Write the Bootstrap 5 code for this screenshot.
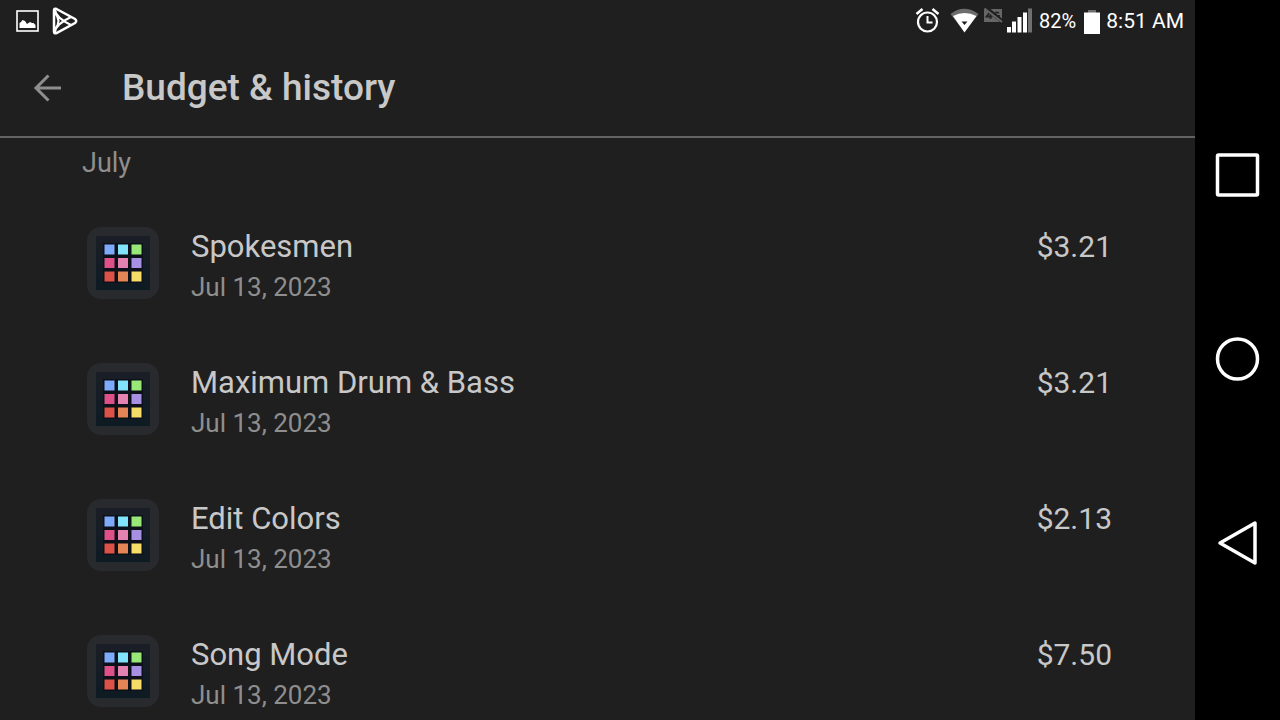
<!DOCTYPE html>
<html lang="en" data-bs-theme="dark">
<head>
<meta charset="utf-8">
<meta name="viewport" content="width=device-width, initial-scale=1">
<title>Budget &amp; history</title>
<link href="https://cdn.jsdelivr.net/npm/bootstrap@5.3.0/dist/css/bootstrap.min.css" rel="stylesheet">
<style>
  body { background: #1f1f1f; color: #c8c8c8; font-family: Roboto, sans-serif; }
  svg { display: block; flex: none; }
  .screen { height: 100vh; }
  .status { height: 40px; padding: 2px 11px 0 16px; gap: 13px; color: #fff; font-size: 21px; line-height: 24px; }
  .charge { font-size: 20px; }
  .battery { margin: 0 6px 0 8px; }
  .topbar { height: 98px; border-bottom: 2px solid #636363; padding: 0 32px; gap: 58px; }
  .topbar h1 { font-size: 37px; line-height: 40px; font-weight: 500; color: #c8c8c8; }
  .back { color: #8e8e8e; }
  .month { font-size: 27px; line-height: 32px; font-weight: 400; color: #8e8e8e; padding: 9px 82px 0; }
  .purchases { padding: 20px 83px 0; }
  .purchase { height: 136px; padding: 28px 0 0 4px; gap: 32px; }
  .name { font-size: 31px; line-height: 40px; }
  .price { font-size: 30px; line-height: 40px; }
  .date { font-size: 26px; line-height: 40px; color: #8e8e8e; }
  .rail { width: 85px; background: #000; padding-top: 83px; }
  .rail button { height: 184px; }
</style>
</head>
<body>
<div class="screen d-flex overflow-hidden">
  <div class="flex-grow-1 overflow-hidden">
    <div class="status d-flex align-items-center">
      <svg width="23" height="22" viewBox="0 0 23 22" aria-hidden="true"><rect x="1" y="1" width="21" height="20" fill="none" stroke="#fff" stroke-width="1.600"/><path d="M3.500 18v-5l1.500-1 1.500-2 2.500 1 2 3 3-2 2 1 1.500 0 2 2v3z" fill="#fff"/></svg>
      <svg width="26" height="28" viewBox="0 0 26 28" fill="none" stroke="#fff" aria-hidden="true"><path d="M2 3.500Q2 .800 4.500 2L23 12q2.500 2 0 4L4.500 26Q2 27 2 24.500z" stroke-width="2.500"/><path d="M3 3q1 8 16 15M3 25q1-8 16-15M3 6q7 8 0 16" stroke-width="2.100"/></svg>
      <div class="ms-auto d-flex align-items-center">
        <svg width="124" height="40" viewBox="916 1 124 40" role="img" aria-label="Alarm, Wi-Fi, no 4G, signal strength">
          <g fill="none" stroke="#fff"><circle cx="928.500" cy="22" r="9.500" stroke-width="2.200"/><path d="M928.500 16v6.500h5" stroke-width="2"/><path d="M917.500 14l6-5M939.500 14l-6-5" stroke-width="2.500"/></g>
          <path d="M951.500 14q13.500-10.500 28 0L965.500 32z" fill="#6d6d6d"/><path d="M954 16q11.500-6 23.500 0L965.500 32.500z" fill="#fff"/><path d="M962.500 21.500h6l-3 3.500z" fill="#1f1f1f"/>
          <path d="M985 9h18v13h-18z" fill="#666"/><path d="M991 12l-3.500 4.500h6M991.500 12v7M1000 13q-4-2-4 2t4 3v-2h-2" fill="none" stroke="#242424" stroke-width="1.800"/><path d="M986.500 7.500L1004 22" stroke="#1f1f1f" stroke-width="4"/><path d="M985.500 8.500L1003 22" stroke="#666" stroke-width="2"/>
          <path d="M1008 27h4v5.500h-4zM1013 21.500h4v11h-4zM1018.500 17h4v15.500h-4zM1024 12.500h4v20h-4z" fill="#fff"/><path d="M1029 8.500h4v24h-4z" fill="#707070"/>
        </svg>
        <span class="charge">82%</span>
        <svg class="battery" width="16" height="25" viewBox="0 0 16 25" aria-hidden="true"><path d="M4 1h8v4H4z" fill="#707070"/><path d="M0 3.500h16V25H0z" fill="#fff"/></svg>
        <span>8:51 AM</span>
      </div>
    </div>
    <header class="topbar d-flex align-items-center">
      <button type="button" class="back btn p-0 border-0" aria-label="Back"><svg width="32" height="32" viewBox="0 0 32 32" fill="none" stroke="currentColor" stroke-width="3"><path d="M29 16H4M16.500 3.500L4 16l12.500 12.500"/></svg></button>
      <h1 class="m-0">Budget &amp; history</h1>
    </header>
    <main>
      <h2 class="month m-0">July</h2>
      <ul class="purchases list-unstyled m-0">
        <li class="purchase d-flex"><svg width="72" height="72" aria-hidden="true"><use href="#pads"/></svg><div class="flex-grow-1"><div class="name">Spokesmen</div><div class="date">Jul 13, 2023</div></div><div class="price">$3.21</div></li>
        <li class="purchase d-flex"><svg width="72" height="72" aria-hidden="true"><use href="#pads"/></svg><div class="flex-grow-1"><div class="name">Maximum Drum &amp; Bass</div><div class="date">Jul 13, 2023</div></div><div class="price">$3.21</div></li>
        <li class="purchase d-flex"><svg width="72" height="72" aria-hidden="true"><use href="#pads"/></svg><div class="flex-grow-1"><div class="name">Edit Colors</div><div class="date">Jul 13, 2023</div></div><div class="price">$2.13</div></li>
        <li class="purchase d-flex"><svg width="72" height="72" aria-hidden="true"><use href="#pads"/></svg><div class="flex-grow-1"><div class="name">Song Mode</div><div class="date">Jul 13, 2023</div></div><div class="price">$7.50</div></li>
      </ul>
    </main>
  </div>
  <nav class="rail d-flex flex-column flex-shrink-0" aria-label="System navigation">
    <button type="button" class="btn p-0 border-0 d-flex align-items-center justify-content-center" aria-label="Recent apps"><svg width="46" height="46" viewBox="0 0 46 46" fill="none" stroke="#fff" stroke-width="3.500"><rect x="2.500" y="3" width="40" height="40" rx="1"/></svg></button>
    <button type="button" class="btn p-0 border-0 d-flex align-items-center justify-content-center" aria-label="Home"><svg width="46" height="46" viewBox="0 0 46 46" fill="none" stroke="#fff" stroke-width="3.500"><circle cx="22.500" cy="23" r="20"/></svg></button>
    <button type="button" class="btn p-0 border-0 d-flex align-items-center justify-content-center" aria-label="Back"><svg width="46" height="46" viewBox="0 0 46 46" fill="none" stroke="#fff" stroke-width="3.500" stroke-linejoin="round"><path d="M40 3v40L5 23z"/></svg></button>
  </nav>
</div>
<svg width="0" height="0" class="position-absolute" aria-hidden="true">
  <defs>
    <linearGradient id="night" x2="0" y2="1"><stop stop-color="#1b1e27"/><stop offset="1" stop-color="#0d1b22"/></linearGradient>
    <symbol id="pads" viewBox="0 0 72 72">
      <rect width="72" height="72" rx="14" fill="#292a2e"/><path d="M9 9h54v54H9z" fill="url(#night)"/>
      <path d="M16 16h40v40H16z" fill="#0c1119"/>
      <path d="M17.500 17.500h10v10h-10z" fill="#7eabf9"/><path d="M31 17.500h10v10H31z" fill="#82e4fb"/><path d="M44.500 17.500h10v10h-10z" fill="#98e878"/>
      <path d="M17.500 31h10v10h-10z" fill="#dd5188"/><path d="M31 31h10v10H31z" fill="#e482b2"/><path d="M44.500 31h10v10h-10z" fill="#a78fe3"/>
      <path d="M17.500 44.500h10v10h-10z" fill="#dc5148"/><path d="M31 44.500h10v10H31z" fill="#e58555"/><path d="M44.500 44.500h10v10h-10z" fill="#f6dd68"/>
    </symbol>
  </defs>
</svg>
<script src="https://cdn.jsdelivr.net/npm/bootstrap@5.3.0/dist/js/bootstrap.bundle.min.js"></script>
</body>
</html>
